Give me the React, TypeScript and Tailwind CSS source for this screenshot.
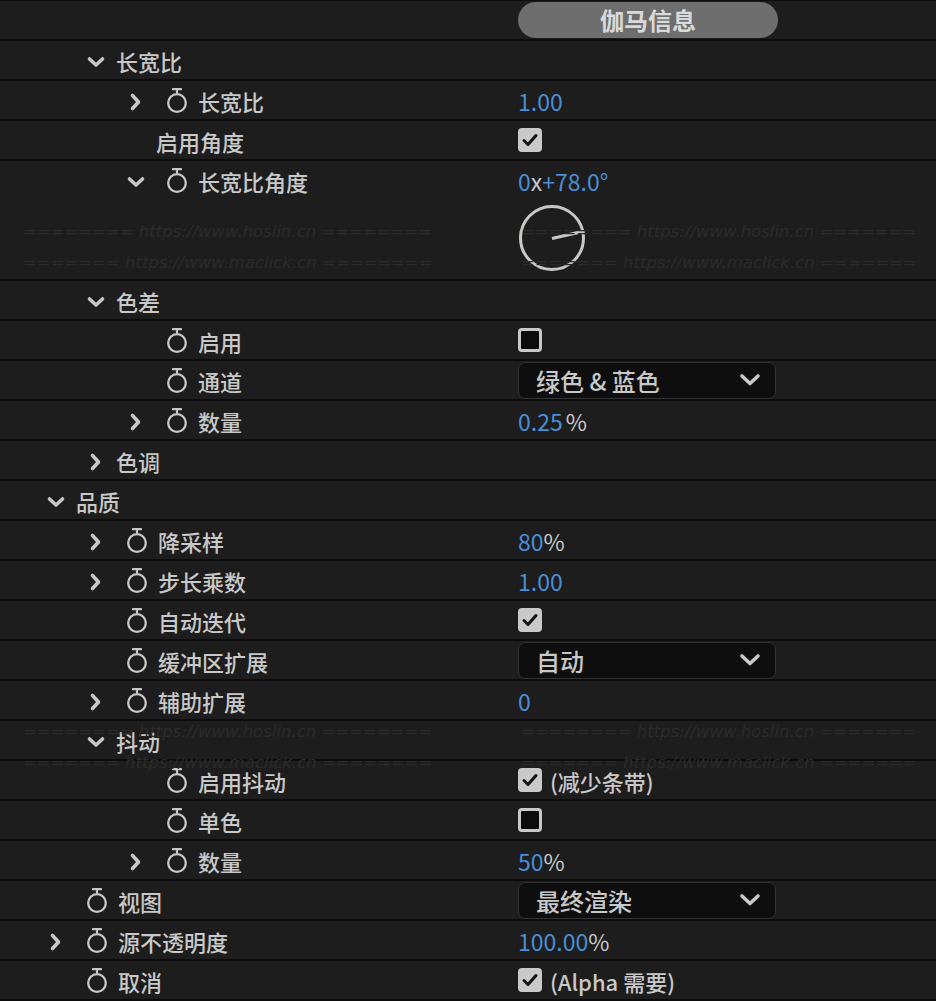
import React from "react";

const FONT = { fontFamily: '"Noto Sans CJK SC", "Noto Sans", sans-serif' };

function ChevRight() {
  return (
    <svg width="20" height="20" viewBox="0 0 20 20">
      <polyline points="6.5,3.5 12.5,10 6.5,16.5" fill="none" stroke="#c8c8c8" strokeWidth="3.6" strokeLinecap="round" strokeLinejoin="round" />
    </svg>
  );
}
function ChevDown() {
  return (
    <svg width="20" height="20" viewBox="0 0 20 20">
      <polyline points="3.5,7 10,13 16.5,7" fill="none" stroke="#c8c8c8" strokeWidth="3.6" strokeLinecap="round" strokeLinejoin="round" />
    </svg>
  );
}
function Stopwatch() {
  return (
    <svg width="22" height="26" viewBox="0 0 22 26">
      <circle cx="11" cy="16" r="8.8" fill="none" stroke="#c8c8c8" strokeWidth="2.3" />
      <line x1="11" y1="7" x2="11" y2="2.2" stroke="#c8c8c8" strokeWidth="2.2" />
      <line x1="7" y1="2.2" x2="15" y2="2.2" stroke="#c8c8c8" strokeWidth="2.2" strokeLinecap="round" />
    </svg>
  );
}
function Check({ on }: { on: boolean }) {
  if (on)
    return (
      <div className="w-[24px] h-[24px] rounded-[4px] bg-[#c9c9c9] flex items-center justify-center shrink-0">
        <svg width="18" height="18" viewBox="0 0 18 18">
          <polyline points="3,9.5 7,13.5 15,4.5" fill="none" stroke="#111" strokeWidth="3" strokeLinecap="round" strokeLinejoin="round" />
        </svg>
      </div>
    );
  return <div className="w-[24px] h-[24px] rounded-[4px] border-[3px] border-[#c9c9c9] bg-[#0d0d0d] shrink-0" />;
}
function Dropdown({ text }: { text: string }) {
  return (
    <div className="w-[258px] h-[37px] rounded-[7px] border border-[#333333] bg-[#0e0e0e] flex items-center justify-between pl-[17px] pr-[14px]">
      <span className="text-[24px] font-medium text-[#c8c8c8] leading-none pt-[1px]">{text}</span>
      <svg width="22" height="14" viewBox="0 0 22 14">
        <polyline points="3,3 11,10.5 19,3" fill="none" stroke="#c8c8c8" strokeWidth="3.6" strokeLinecap="round" strokeLinejoin="round" />
      </svg>
    </div>
  );
}
const Blue = ({ children }: { children: React.ReactNode }) => <span className="text-[#4a8ed8]">{children}</span>;
const Gray = ({ children }: { children: React.ReactNode }) => <span className="text-[#c8c8c8]">{children}</span>;

type RowT = {
  level: number;
  chev?: "r" | "d";
  sw?: boolean;
  label: string;
  value?: React.ReactNode;
  tall?: boolean;
};

const pad = ["pl-[46px]", "pl-[86px]", "pl-[126px]"];

function Dial() {
  const a = (78 * Math.PI) / 180;
  const cx = 35,
    cy = 35,
    r = 33;
  const x2 = cx + Math.sin(a) * r;
  const y2 = cy - Math.cos(a) * r;
  return (
    <svg width="70" height="70" viewBox="0 0 70 70">
      <circle cx={cx} cy={cy} r={31.5} fill="none" stroke="#c8c8c8" strokeWidth="3" />
      <line x1={cx} y1={cy + 0.5} x2={x2} y2={y2} stroke="#c8c8c8" strokeWidth="3.2" />
    </svg>
  );
}

function Row({ r }: { r: RowT }) {
  return (
    <div className={`flex border-b-2 border-[#0c0c0c] ${r.tall ? "h-[120px]" : "h-[40px]"}`}>
      <div className={`w-[518px] shrink-0 flex items-start ${pad[r.level]}`}>
        <div className="h-[38px] flex items-center">
          <div className="w-[20px] h-[20px] flex items-center justify-center mt-[3px]">
            {r.chev === "r" ? <ChevRight /> : r.chev === "d" ? <ChevDown /> : null}
          </div>
          {r.sw ? (
            <>
              <div className="ml-[20px] w-[22px] h-[26px]">
                <Stopwatch />
              </div>
              <span className="ml-[10px] text-[22px] font-medium text-[#c8c8c8] leading-none pt-[1px]">{r.label}</span>
            </>
          ) : (
            <span className="ml-[10px] text-[22px] font-medium text-[#c8c8c8] leading-none pt-[1px]">{r.label}</span>
          )}
        </div>
      </div>
      <div className="flex-1 flex flex-col items-start">{r.value}</div>
    </div>
  );
}

const Val = ({ children }: { children: React.ReactNode }) => (
  <div className="h-[38px] flex items-center text-[23px] leading-none pt-[3px]">{children}</div>
);
const CheckVal = ({ on, text }: { on: boolean; text?: string }) => (
  <div className="h-[38px] flex items-center">
    <Check on={on} />
    {text ? <span className="ml-[8px] text-[22px] font-medium text-[#c8c8c8] leading-none pt-[1px]">{text}</span> : null}
  </div>
);
const DropVal = ({ text }: { text: string }) => (
  <div className="h-[38px] flex items-center">
    <Dropdown text={text} />
  </div>
);

const rows: RowT[] = [
  { level: 1, chev: "d", label: "长宽比" },
  { level: 2, chev: "r", sw: true, label: "长宽比", value: <Val><Blue>1.00</Blue></Val> },
  { level: 2, label: "启用角度", value: <CheckVal on /> },
  {
    level: 2,
    chev: "d",
    sw: true,
    label: "长宽比角度",
    tall: true,
    value: (
      <>
        <Val>
          <Blue>0</Blue>
          <Gray>x</Gray>
          <Blue>+78.0°</Blue>
        </Val>
        <div className="-ml-[1px] mt-[4px]">
          <Dial />
        </div>
      </>
    ),
  },
  { level: 1, chev: "d", label: "色差" },
  { level: 2, sw: true, label: "启用", value: <CheckVal on={false} /> },
  { level: 2, sw: true, label: "通道", value: <DropVal text="绿色 & 蓝色" /> },
  { level: 2, chev: "r", sw: true, label: "数量", value: <Val><Blue>0.25</Blue><span className="ml-[3px] text-[#c8c8c8]">%</span></Val> },
  { level: 1, chev: "r", label: "色调" },
  { level: 0, chev: "d", label: "品质" },
  { level: 1, chev: "r", sw: true, label: "降采样", value: <Val><Blue>80</Blue><Gray>%</Gray></Val> },
  { level: 1, chev: "r", sw: true, label: "步长乘数", value: <Val><Blue>1.00</Blue></Val> },
  { level: 1, sw: true, label: "自动迭代", value: <CheckVal on /> },
  { level: 1, sw: true, label: "缓冲区扩展", value: <DropVal text="自动" /> },
  { level: 1, chev: "r", sw: true, label: "辅助扩展", value: <Val><Blue>0</Blue></Val> },
  { level: 1, chev: "d", label: "抖动" },
  { level: 2, sw: true, label: "启用抖动", value: <CheckVal on text="(减少条带)" /> },
  { level: 2, sw: true, label: "单色", value: <CheckVal on={false} /> },
  { level: 2, chev: "r", sw: true, label: "数量", value: <Val><Blue>50</Blue><Gray>%</Gray></Val> },
  { level: 0, sw: true, label: "视图", value: <DropVal text="最终渲染" /> },
  { level: 0, chev: "r", sw: true, label: "源不透明度", value: <Val><Blue>100.00</Blue><Gray>%</Gray></Val> },
  { level: 0, sw: true, label: "取消", value: <CheckVal on text="(Alpha 需要)" /> },
];

const WM_STYLE = { fontFamily: '"DejaVu Sans", sans-serif' };

function Watermarks({ top }: { top: number }) {
  const cls = "absolute italic text-[16.5px] leading-none text-[#2b2b2b] whitespace-nowrap pointer-events-none";
  return (
    <>
      <div className={cls} style={{ ...WM_STYLE, left: 23, top: top }}>======== https://www.hoslin.cn ========</div>
      <div className={cls} style={{ ...WM_STYLE, left: 23, top: top + 31 }}>======= https://www.maclick.cn ========</div>
      <div className={cls} style={{ ...WM_STYLE, left: 521, top: top }}>======== https://www.hoslin.cn =======</div>
      <div className={cls} style={{ ...WM_STYLE, left: 521, top: top + 31 }}>======= https://www.maclick.cn =======</div>
    </>
  );
}

export default function App() {
  return (
    <div className="relative w-[936px] h-[1001px] bg-[#1d1d1d] overflow-hidden" style={FONT}>
      <div className="h-[1px] bg-[#0c0c0c]" />
      <div className="flex h-[40px] border-b-2 border-[#0c0c0c]">
        <div className="w-[518px] shrink-0" />
        <div className="h-[38px] flex items-center">
          <div className="w-[260px] h-[36px] rounded-full bg-[#6e6e6e] flex items-center justify-center">
            <span className="text-[24px] font-bold text-[#dadada] leading-none">伽马信息</span>
          </div>
        </div>
      </div>
      {rows.map((r, i) => (
        <Row key={i} r={r} />
      ))}
      <Watermarks top={224} />
      <Watermarks top={724} />
    </div>
  );
}
